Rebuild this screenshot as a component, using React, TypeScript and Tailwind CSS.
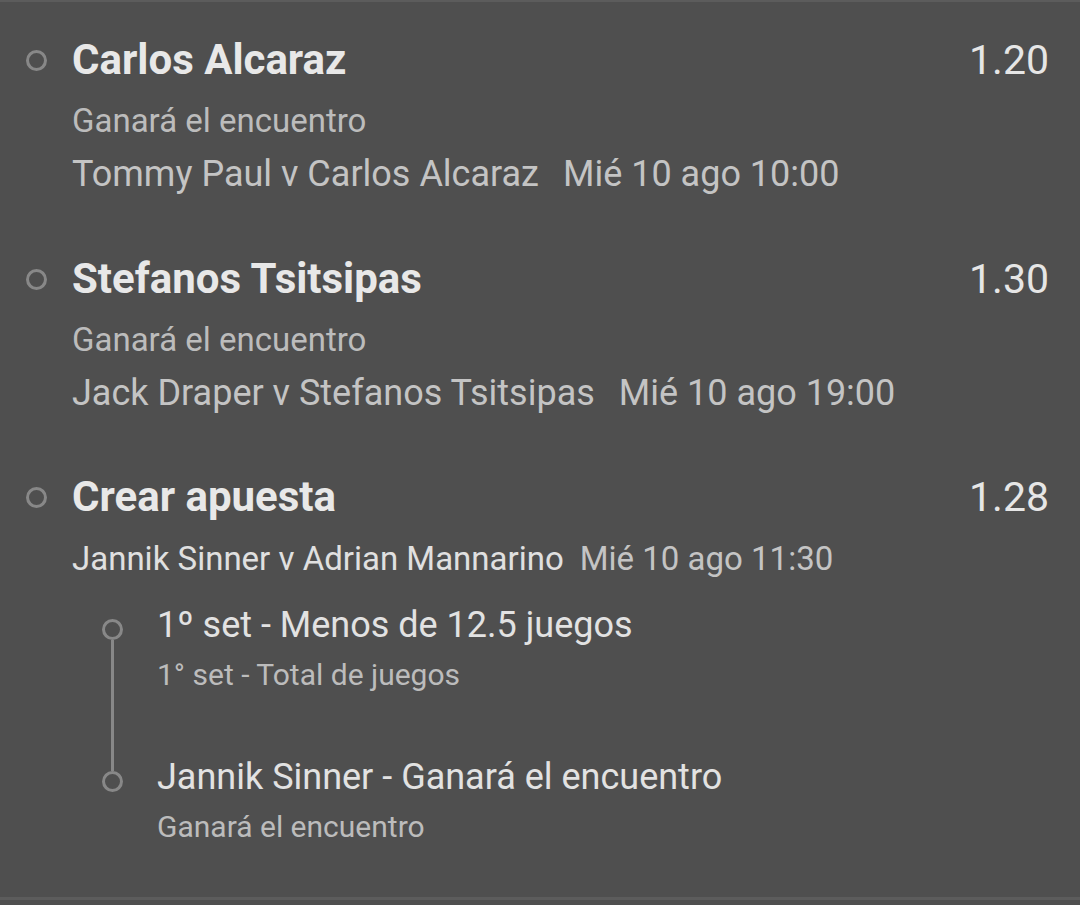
import React from 'react';

const Dot = () => (
  <span className="block w-[21px] h-[21px] rounded-full border-[3px] border-[#888888] shrink-0" />
);

interface SelectionProps {
  title: string;
  odds: string;
  market: string;
  match: string;
  date: string;
}

const Selection: React.FC<SelectionProps> = ({ title, odds, market, match, date }) => (
  <div className="flex pt-[33px] pb-[25px]">
    <div className="w-[72px] pl-[26px] pt-[15px]">
      <Dot />
    </div>
    <div className="flex-1">
      <div className="flex justify-between items-baseline">
        <span className="text-[42px] font-bold text-[#e8e8e8] leading-[50px]">{title}</span>
        <span className="text-[41px] text-[#e6e6e6] leading-[50px] pr-[31px]">{odds}</span>
      </div>
      <div className="text-[33px] text-[#bcbcbc] leading-[40px] mt-[16px]">{market}</div>
      <div className="text-[36px] text-[#c4c4c4] leading-[44px] mt-[11px]">
        {match}
        <span className="ml-[24px]">{date}</span>
      </div>
    </div>
  </div>
);

const Leg: React.FC<{ title: string; market: string; last?: boolean }> = ({ title, market, last }) => (
  <div className="flex">
    <div className="w-[85px] flex flex-col items-start">
      {last ? (
        <span className="block ml-[39px] w-[3px] h-[16px] bg-[#888888]" />
      ) : (
        <span className="block h-[16px]" />
      )}
      <div className="ml-[30px]">
        <Dot />
      </div>
      {!last && <span className="block ml-[39px] w-[3px] flex-1 bg-[#888888]" />}
    </div>
    <div className={last ? 'pb-[52px]' : 'pb-[62px]'}>
      <div className="text-[36px] text-[#e2e2e2] leading-[44px]">{title}</div>
      <div className="text-[30px] text-[#bcbcbc] leading-[36px] mt-[10px]">{market}</div>
    </div>
  </div>
);

export default function App() {
  return (
    <div
      className="w-[1080px] h-[905px] bg-[#4f4f4f] border-t-2 border-[#5c5c5c] overflow-hidden"
      style={{ fontFamily: 'Roboto, "Noto Sans", sans-serif' }}
    >
      <Selection
        title="Carlos Alcaraz"
        odds="1.20"
        market="Ganará el encuentro"
        match="Tommy Paul v Carlos Alcaraz"
        date="Mié 10 ago 10:00"
      />
      <Selection
        title="Stefanos Tsitsipas"
        odds="1.30"
        market="Ganará el encuentro"
        match="Jack Draper v Stefanos Tsitsipas"
        date="Mié 10 ago 19:00"
      />
      <div className="flex pt-[32px]">
        <div className="w-[72px] pl-[26px] pt-[15px]">
          <Dot />
        </div>
        <div className="flex-1">
          <div className="flex justify-between items-baseline">
            <span className="text-[42px] font-bold text-[#e8e8e8] leading-[50px]">Crear apuesta</span>
            <span className="text-[41px] text-[#e6e6e6] leading-[50px] pr-[31px]">1.28</span>
          </div>
          <div className="text-[33px] text-[#e0e0e0] leading-[42px] mt-[16px]">
            Jannik Sinner v Adrian Mannarino
            <span className="ml-[16px] text-[#c4c4c4]">Mié 10 ago 11:30</span>
          </div>
          <div className="mt-[23px]">
            <Leg title="1º set - Menos de 12.5 juegos" market="1° set - Total de juegos" />
            <Leg title="Jannik Sinner - Ganará el encuentro" market="Ganará el encuentro" last />
          </div>
        </div>
      </div>
      <div className="h-[3px] bg-[#5c5c5c]" />
    </div>
  );
}
